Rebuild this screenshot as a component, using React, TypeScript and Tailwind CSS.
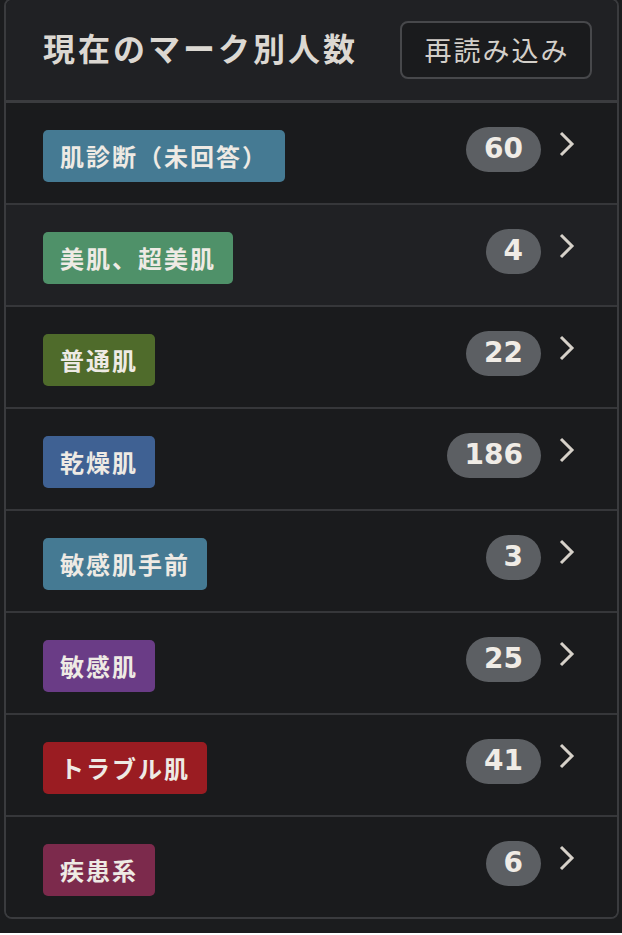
import React from "react";

const rows = [
  { label: "肌診断（未回答）", color: "bg-[#457a93]", count: 60, bg: "bg-[#1a1b1d]" },
  { label: "美肌、超美肌", color: "bg-[#4f9169]", count: 4, bg: "bg-[#202124]" },
  { label: "普通肌", color: "bg-[#4f6b2b]", count: 22, bg: "bg-[#1a1b1d]" },
  { label: "乾燥肌", color: "bg-[#3f6193]", count: 186, bg: "bg-[#1a1b1d]" },
  { label: "敏感肌手前", color: "bg-[#457a93]", count: 3, bg: "bg-[#1a1b1d]" },
  { label: "敏感肌", color: "bg-[#6a3c86]", count: 25, bg: "bg-[#1a1b1d]" },
  { label: "トラブル肌", color: "bg-[#9a1c22]", count: 41, bg: "bg-[#1a1b1d]" },
  { label: "疾患系", color: "bg-[#7c2a4c]", count: 6, bg: "bg-[#1a1b1d]" },
];

const jp = { fontFamily: '"Noto Sans CJK JP", "Noto Sans", sans-serif' };
const num = { fontFamily: '"DejaVu Sans", sans-serif' };

export default function App() {
  return (
    <div className="min-h-[935px] w-[622px] bg-[#1b1c1e] pl-[4px] pr-[3px]" style={jp}>
      <div className="mt-[-2px] overflow-hidden rounded-[8px] border-2 border-[#3a3b3e]">
        <div className="flex h-[103px] items-center justify-between border-b-[3px] border-[#3b3c3f] bg-[#202124] pl-[37px] pr-[25px]">
          <h1 className="mb-[6px] text-[32px] font-bold tracking-[3px] text-[#dcd8d2]">現在のマーク別人数</h1>
          <button className="flex h-[58px] w-[192px] items-center justify-center rounded-[8px] border-2 border-[#47484b] bg-[#1a1b1d] pl-[2px] text-[27px] tracking-[2px] text-[#d3cfc9]">
            再読み込み
          </button>
        </div>
        {rows.map((r, i) => (
          <div
            key={i}
            className={`flex items-center justify-between pl-[37px] pr-[41px] ${r.bg} ${
              i < rows.length - 1 ? "h-[102px] border-b-2 border-[#36373a]" : "h-[100px]"
            }`}
          >
            <div
              className={`mt-[6px] flex h-[52px] items-center rounded-[5px] px-[17px] text-[24px] font-bold tracking-[2px] text-[#eeeae4] ${r.color}`}
            >
              {r.label}
            </div>
            <div className="mb-[8px] flex items-center gap-[17px]">
              <div
                className="flex h-[45px] items-center rounded-full bg-[#5c5f63] px-[18px] text-[28px] font-bold leading-none text-[#f0ece6]"
                style={num}
              >
                {r.count}
              </div>
              <svg width="18" height="26" viewBox="0 0 18 26" className="mb-[10px]">
                <polyline points="3,2 14,13 3,24" fill="none" stroke="#d6d1c9" strokeWidth="3" />
              </svg>
            </div>
          </div>
        ))}
      </div>
    </div>
  );
}
